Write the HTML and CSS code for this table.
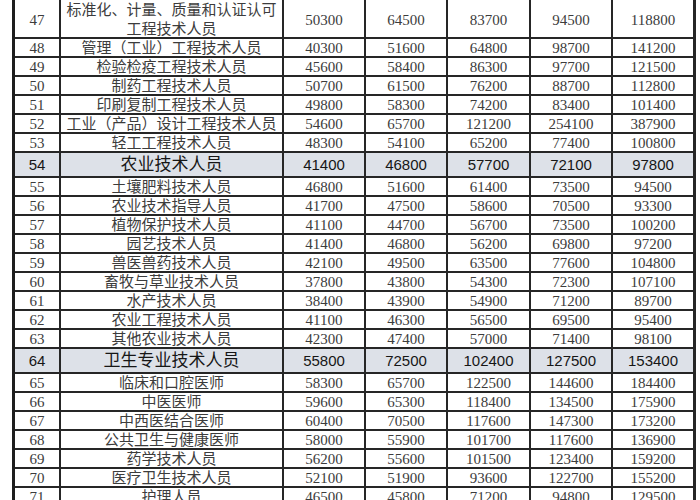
FILE: index.html
```html
<!DOCTYPE html>
<html lang="zh-CN">
<head>
<meta charset="utf-8">
<title>薪酬表</title>
<link rel="stylesheet" href="styles.css">
</head>
<body>
<div class="sheet" role="table">
  <div class="row tall" role="row"><div class="c">47</div><div class="c name two">标准化、计量、质量和认证认可<br>工程技术人员</div><div class="c">50300</div><div class="c">64500</div><div class="c">83700</div><div class="c">94500</div><div class="c">118800</div></div>
  <div class="row" role="row"><div class="c">48</div><div class="c name">管理（工业）工程技术人员</div><div class="c">40300</div><div class="c">51600</div><div class="c">64800</div><div class="c">98700</div><div class="c">141200</div></div>
  <div class="row" role="row"><div class="c">49</div><div class="c name">检验检疫工程技术人员</div><div class="c">45600</div><div class="c">58400</div><div class="c">86300</div><div class="c">97700</div><div class="c">121500</div></div>
  <div class="row" role="row"><div class="c">50</div><div class="c name">制药工程技术人员</div><div class="c">50700</div><div class="c">61500</div><div class="c">76200</div><div class="c">88700</div><div class="c">112800</div></div>
  <div class="row" role="row"><div class="c">51</div><div class="c name">印刷复制工程技术人员</div><div class="c">49800</div><div class="c">58300</div><div class="c">74200</div><div class="c">83400</div><div class="c">101400</div></div>
  <div class="row" role="row"><div class="c">52</div><div class="c name">工业（产品）设计工程技术人员</div><div class="c">54600</div><div class="c">65700</div><div class="c">121200</div><div class="c">254100</div><div class="c">387900</div></div>
  <div class="row" role="row"><div class="c">53</div><div class="c name">轻工工程技术人员</div><div class="c">48300</div><div class="c">54100</div><div class="c">65200</div><div class="c">77400</div><div class="c">100800</div></div>
  <div class="row group" role="row"><div class="c">54</div><div class="c name">农业技术人员</div><div class="c">41400</div><div class="c">46800</div><div class="c">57700</div><div class="c">72100</div><div class="c">97800</div></div>
  <div class="row" role="row"><div class="c">55</div><div class="c name">土壤肥料技术人员</div><div class="c">46800</div><div class="c">51600</div><div class="c">61400</div><div class="c">73500</div><div class="c">94500</div></div>
  <div class="row" role="row"><div class="c">56</div><div class="c name">农业技术指导人员</div><div class="c">41700</div><div class="c">47500</div><div class="c">58600</div><div class="c">70500</div><div class="c">93300</div></div>
  <div class="row" role="row"><div class="c">57</div><div class="c name">植物保护技术人员</div><div class="c">41100</div><div class="c">44700</div><div class="c">56700</div><div class="c">73500</div><div class="c">100200</div></div>
  <div class="row" role="row"><div class="c">58</div><div class="c name">园艺技术人员</div><div class="c">41400</div><div class="c">46800</div><div class="c">56200</div><div class="c">69800</div><div class="c">97200</div></div>
  <div class="row" role="row"><div class="c">59</div><div class="c name">兽医兽药技术人员</div><div class="c">42100</div><div class="c">49500</div><div class="c">63500</div><div class="c">77600</div><div class="c">104800</div></div>
  <div class="row" role="row"><div class="c">60</div><div class="c name">畜牧与草业技术人员</div><div class="c">37800</div><div class="c">43800</div><div class="c">54300</div><div class="c">72300</div><div class="c">107100</div></div>
  <div class="row" role="row"><div class="c">61</div><div class="c name">水产技术人员</div><div class="c">38400</div><div class="c">43900</div><div class="c">54900</div><div class="c">71200</div><div class="c">89700</div></div>
  <div class="row" role="row"><div class="c">62</div><div class="c name">农业工程技术人员</div><div class="c">41100</div><div class="c">46300</div><div class="c">56500</div><div class="c">69500</div><div class="c">95400</div></div>
  <div class="row" role="row"><div class="c">63</div><div class="c name">其他农业技术人员</div><div class="c">42300</div><div class="c">47400</div><div class="c">57000</div><div class="c">71400</div><div class="c">98100</div></div>
  <div class="row group" role="row"><div class="c">64</div><div class="c name">卫生专业技术人员</div><div class="c">55800</div><div class="c">72500</div><div class="c">102400</div><div class="c">127500</div><div class="c">153400</div></div>
  <div class="row" role="row"><div class="c">65</div><div class="c name">临床和口腔医师</div><div class="c">58300</div><div class="c">65700</div><div class="c">122500</div><div class="c">144600</div><div class="c">184400</div></div>
  <div class="row" role="row"><div class="c">66</div><div class="c name">中医医师</div><div class="c">59600</div><div class="c">65300</div><div class="c">118400</div><div class="c">134500</div><div class="c">175900</div></div>
  <div class="row" role="row"><div class="c">67</div><div class="c name">中西医结合医师</div><div class="c">60400</div><div class="c">70500</div><div class="c">117600</div><div class="c">147300</div><div class="c">173200</div></div>
  <div class="row" role="row"><div class="c">68</div><div class="c name">公共卫生与健康医师</div><div class="c">58000</div><div class="c">55900</div><div class="c">101700</div><div class="c">117600</div><div class="c">136900</div></div>
  <div class="row" role="row"><div class="c">69</div><div class="c name">药学技术人员</div><div class="c">56200</div><div class="c">55600</div><div class="c">101500</div><div class="c">123400</div><div class="c">159200</div></div>
  <div class="row" role="row"><div class="c">70</div><div class="c name">医疗卫生技术人员</div><div class="c">52100</div><div class="c">51900</div><div class="c">93600</div><div class="c">122700</div><div class="c">155200</div></div>
  <div class="row" role="row"><div class="c">71</div><div class="c name">护理人员</div><div class="c">46500</div><div class="c">45800</div><div class="c">71200</div><div class="c">94800</div><div class="c">129500</div></div>
</div>
</body>
</html>
```
FILE: styles.css
```css
html, body {
  margin: 0;
  padding: 0;
  background: #ffffff;
}
body {
  width: 700px;
  height: 500px;
  overflow: hidden;
}
.sheet {
  margin-left: 12px;
  width: 684px;
  border-left: 3px solid #1e1e1e;
  box-sizing: border-box;
  display: grid;
  grid-template-columns: 46px 223px 82px 82px 83px 82px 83px;
  font-family: "Liberation Serif", "Noto Sans CJK SC", serif;
  font-size: 15px;
  color: #3c3c3c;
}
.row {
  display: contents;
}
.c {
  box-sizing: border-box;
  height: 19px;
  border-right: 2px solid #262626;
  border-bottom: 2px solid #262626;
  display: flex;
  align-items: center;
  justify-content: center;
  text-align: center;
  line-height: 17px;
  white-space: nowrap;
  padding-top: 1px;
}
.c:last-child {
  border-right-width: 3px;
}
.name {
  font-weight: 400;
}
.tall .c {
  height: 39px;
  padding-top: 3px;
}
.two {
  line-height: 19px;
}
.group .c {
  height: 25px;
  background: #dde1e8;
  color: #161616;
  font-family: "Liberation Sans", "Noto Sans CJK SC", sans-serif;
  font-size: 15px;
  padding-top: 0;
}
.group .name {
  font-size: 17px;
}
```
